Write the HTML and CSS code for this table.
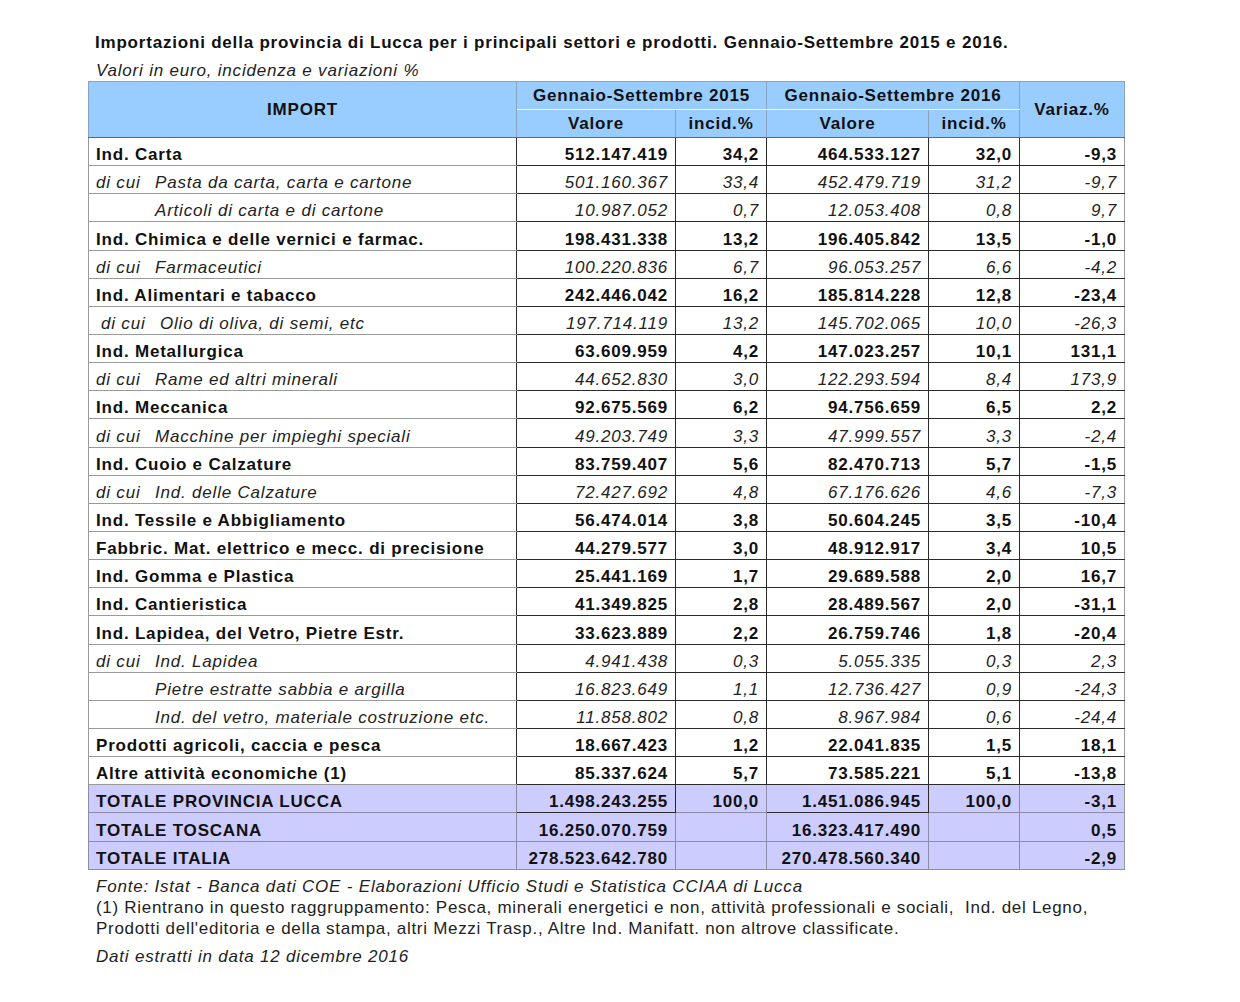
FILE: index.html
```html
<!DOCTYPE html>
<html lang="it">
<head>
<meta charset="utf-8">
<title>Importazioni Lucca</title>
<link rel="stylesheet" href="styles.css">
</head>
<body>
<div class="page">
  <h1 class="title">Importazioni della provincia di Lucca per i principali settori e prodotti. Gennaio-Settembre 2015 e 2016.</h1>
  <p class="subtitle">Valori in euro, incidenza e variazioni %</p>
  <table class="tbl">
    <colgroup>
      <col class="c-label"><col class="c-val"><col class="c-inc"><col class="c-val2"><col class="c-inc"><col class="c-var">
    </colgroup>
    <thead>
      <tr class="h1">
        <th rowspan="2" class="h-import">IMPORT</th>
        <th colspan="2">Gennaio-Settembre 2015</th>
        <th colspan="2">Gennaio-Settembre 2016</th>
        <th rowspan="2" class="h-var">Variaz.%</th>
      </tr>
      <tr class="h2">
        <th>Valore</th><th>incid.%</th><th>Valore</th><th>incid.%</th>
      </tr>
    </thead>
    <tbody>
      <tr class="main"><td class="lbl">Ind. Carta</td><td>512.147.419</td><td>34,2</td><td>464.533.127</td><td>32,0</td><td>-9,3</td></tr>
      <tr class="sub"><td class="lbl"><span class="dc">di cui</span>Pasta da carta, carta e cartone</td><td>501.160.367</td><td>33,4</td><td>452.479.719</td><td>31,2</td><td>-9,7</td></tr>
      <tr class="sub"><td class="lbl"><span class="dc"></span>Articoli di carta e di cartone</td><td>10.987.052</td><td>0,7</td><td>12.053.408</td><td>0,8</td><td>9,7</td></tr>
      <tr class="main"><td class="lbl">Ind. Chimica e delle vernici e farmac.</td><td>198.431.338</td><td>13,2</td><td>196.405.842</td><td>13,5</td><td>-1,0</td></tr>
      <tr class="sub"><td class="lbl"><span class="dc">di cui</span>Farmaceutici</td><td>100.220.836</td><td>6,7</td><td>96.053.257</td><td>6,6</td><td>-4,2</td></tr>
      <tr class="main"><td class="lbl">Ind. Alimentari e tabacco</td><td>242.446.042</td><td>16,2</td><td>185.814.228</td><td>12,8</td><td>-23,4</td></tr>
      <tr class="sub"><td class="lbl"><span class="dc dc-shift">di cui</span>Olio di oliva, di semi, etc</td><td>197.714.119</td><td>13,2</td><td>145.702.065</td><td>10,0</td><td>-26,3</td></tr>
      <tr class="main"><td class="lbl">Ind. Metallurgica</td><td>63.609.959</td><td>4,2</td><td>147.023.257</td><td>10,1</td><td>131,1</td></tr>
      <tr class="sub"><td class="lbl"><span class="dc">di cui</span>Rame ed altri minerali</td><td>44.652.830</td><td>3,0</td><td>122.293.594</td><td>8,4</td><td>173,9</td></tr>
      <tr class="main"><td class="lbl">Ind. Meccanica</td><td>92.675.569</td><td>6,2</td><td>94.756.659</td><td>6,5</td><td>2,2</td></tr>
      <tr class="sub"><td class="lbl"><span class="dc">di cui</span>Macchine per impieghi speciali</td><td>49.203.749</td><td>3,3</td><td>47.999.557</td><td>3,3</td><td>-2,4</td></tr>
      <tr class="main"><td class="lbl">Ind. Cuoio e Calzature</td><td>83.759.407</td><td>5,6</td><td>82.470.713</td><td>5,7</td><td>-1,5</td></tr>
      <tr class="sub"><td class="lbl"><span class="dc">di cui</span>Ind. delle Calzature</td><td>72.427.692</td><td>4,8</td><td>67.176.626</td><td>4,6</td><td>-7,3</td></tr>
      <tr class="main"><td class="lbl">Ind. Tessile e Abbigliamento</td><td>56.474.014</td><td>3,8</td><td>50.604.245</td><td>3,5</td><td>-10,4</td></tr>
      <tr class="main"><td class="lbl">Fabbric. Mat. elettrico e mecc. di precisione</td><td>44.279.577</td><td>3,0</td><td>48.912.917</td><td>3,4</td><td>10,5</td></tr>
      <tr class="main"><td class="lbl">Ind. Gomma e Plastica</td><td>25.441.169</td><td>1,7</td><td>29.689.588</td><td>2,0</td><td>16,7</td></tr>
      <tr class="main"><td class="lbl">Ind. Cantieristica</td><td>41.349.825</td><td>2,8</td><td>28.489.567</td><td>2,0</td><td>-31,1</td></tr>
      <tr class="main"><td class="lbl">Ind. Lapidea, del Vetro, Pietre Estr.</td><td>33.623.889</td><td>2,2</td><td>26.759.746</td><td>1,8</td><td>-20,4</td></tr>
      <tr class="sub"><td class="lbl"><span class="dc">di cui</span>Ind. Lapidea</td><td>4.941.438</td><td>0,3</td><td>5.055.335</td><td>0,3</td><td>2,3</td></tr>
      <tr class="sub"><td class="lbl"><span class="dc"></span>Pietre estratte sabbia e argilla</td><td>16.823.649</td><td>1,1</td><td>12.736.427</td><td>0,9</td><td>-24,3</td></tr>
      <tr class="sub"><td class="lbl"><span class="dc"></span>Ind. del vetro, materiale costruzione etc.</td><td>11.858.802</td><td>0,8</td><td>8.967.984</td><td>0,6</td><td>-24,4</td></tr>
      <tr class="main"><td class="lbl">Prodotti agricoli, caccia e pesca</td><td>18.667.423</td><td>1,2</td><td>22.041.835</td><td>1,5</td><td>18,1</td></tr>
      <tr class="main"><td class="lbl">Altre attività economiche (1)</td><td>85.337.624</td><td>5,7</td><td>73.585.221</td><td>5,1</td><td>-13,8</td></tr>
      <tr class="main tot tot-first"><td class="lbl">TOTALE PROVINCIA LUCCA</td><td class="boxed">1.498.243.255</td><td>100,0</td><td class="boxed">1.451.086.945</td><td>100,0</td><td>-3,1</td></tr>
      <tr class="main tot"><td class="lbl">TOTALE TOSCANA</td><td>16.250.070.759</td><td></td><td>16.323.417.490</td><td></td><td>0,5</td></tr>
      <tr class="main tot"><td class="lbl">TOTALE ITALIA</td><td>278.523.642.780</td><td></td><td>270.478.560.340</td><td></td><td>-2,9</td></tr>
    </tbody>
  </table>
  <div class="notes">
    <p class="note-src">Fonte: Istat - Banca dati COE - Elaborazioni Ufficio Studi e Statistica CCIAA di Lucca</p>
    <p class="note-1">(1) Rientrano in questo raggruppamento: Pesca, minerali energetici e non, attività professionali e sociali,&nbsp; Ind. del Legno,<br>Prodotti dell'editoria e della stampa, altri Mezzi Trasp., Altre Ind. Manifatt. non altrove classificate.</p>
    <p class="note-date">Dati estratti in data 12 dicembre 2016</p>
  </div>
</div>
</body>
</html>
```

FILE: styles.css
```css
html, body {
  margin: 0;
  padding: 0;
  background: #ffffff;
}

body {
  font-family: "Liberation Sans", Arial, sans-serif;
  color: #111;
  letter-spacing: 0.8px;
}

.page {
  padding: 33px 0 0 88px;
}

.title {
  margin: 0;
  padding-left: 7px;
  font-size: 17px;
  line-height: 20px;
  font-weight: bold;
  color: #111;
}

.subtitle {
  margin: 8px 0 0 0;
  padding-left: 8px;
  font-size: 17px;
  line-height: 20px;
  font-style: italic;
  color: #222;
}

.tbl {
  margin-top: 0;
  border-collapse: collapse;
  table-layout: fixed;
  width: 1036px;
  font-size: 17px;
}

.c-label { width: 428px; }
.c-val { width: 159px; }
.c-inc { width: 91px; }
.c-val2 { width: 162px; }
.c-var { width: 105px; }

.tbl th {
  background: #99ccff;
  font-weight: bold;
  height: 27px;
  padding: 0;
  border: 1px solid #8aa4c0;
  text-align: center;
  vertical-align: middle;
  line-height: 20px;
}

.tbl .h1 th {
  border-bottom-color: #ffffff;
}

.tbl .h1 th.h-import,
.tbl .h1 th.h-var {
  border-bottom: 1px solid #666;
}

.tbl .h2 th {
  border-bottom: 1px solid #666;
}

.tbl td {
  height: 27.15px;
  padding: 0 7px 0 7px;
  vertical-align: bottom;
  text-align: right;
  line-height: 20px;
  border: 1px solid #2a2a2a;
  white-space: nowrap;
}

.tbl td.lbl {
  text-align: left;
  border-top-color: #9a9a9a;
  border-bottom-color: #9a9a9a;
  border-left-color: #9a9a9a;
}

.tbl td:last-child {
  border-right-color: #9a9a9a;
}

.main td {
  font-weight: bold;
}

.sub td {
  font-style: italic;
  font-weight: normal;
  color: #222;
}

.dc {
  display: inline-block;
  width: 59px;
}

.dc-shift {
  padding-left: 5px;
}

.tot td {
  background: #ccccff;
  border-color: #8c8ca8;
}

.tot td.lbl {
  border-color: #8c8ca8;
}

.tot-first td {
  border-top-color: #2a2a2a;
}

.tot td.boxed {
  border: 1px solid #2a2a2a;
}

.notes {
  margin-top: 6px;
  padding-left: 8px;
  font-size: 17px;
  color: #222;
}

.notes p {
  margin: 0;
  line-height: 21px;
}

.note-src {
  font-style: italic;
}

.note-1 {
  margin-top: 1px;
  letter-spacing: 0.7px;
}

.notes .note-date {
  margin-top: 7px;
  font-style: italic;
}
```
